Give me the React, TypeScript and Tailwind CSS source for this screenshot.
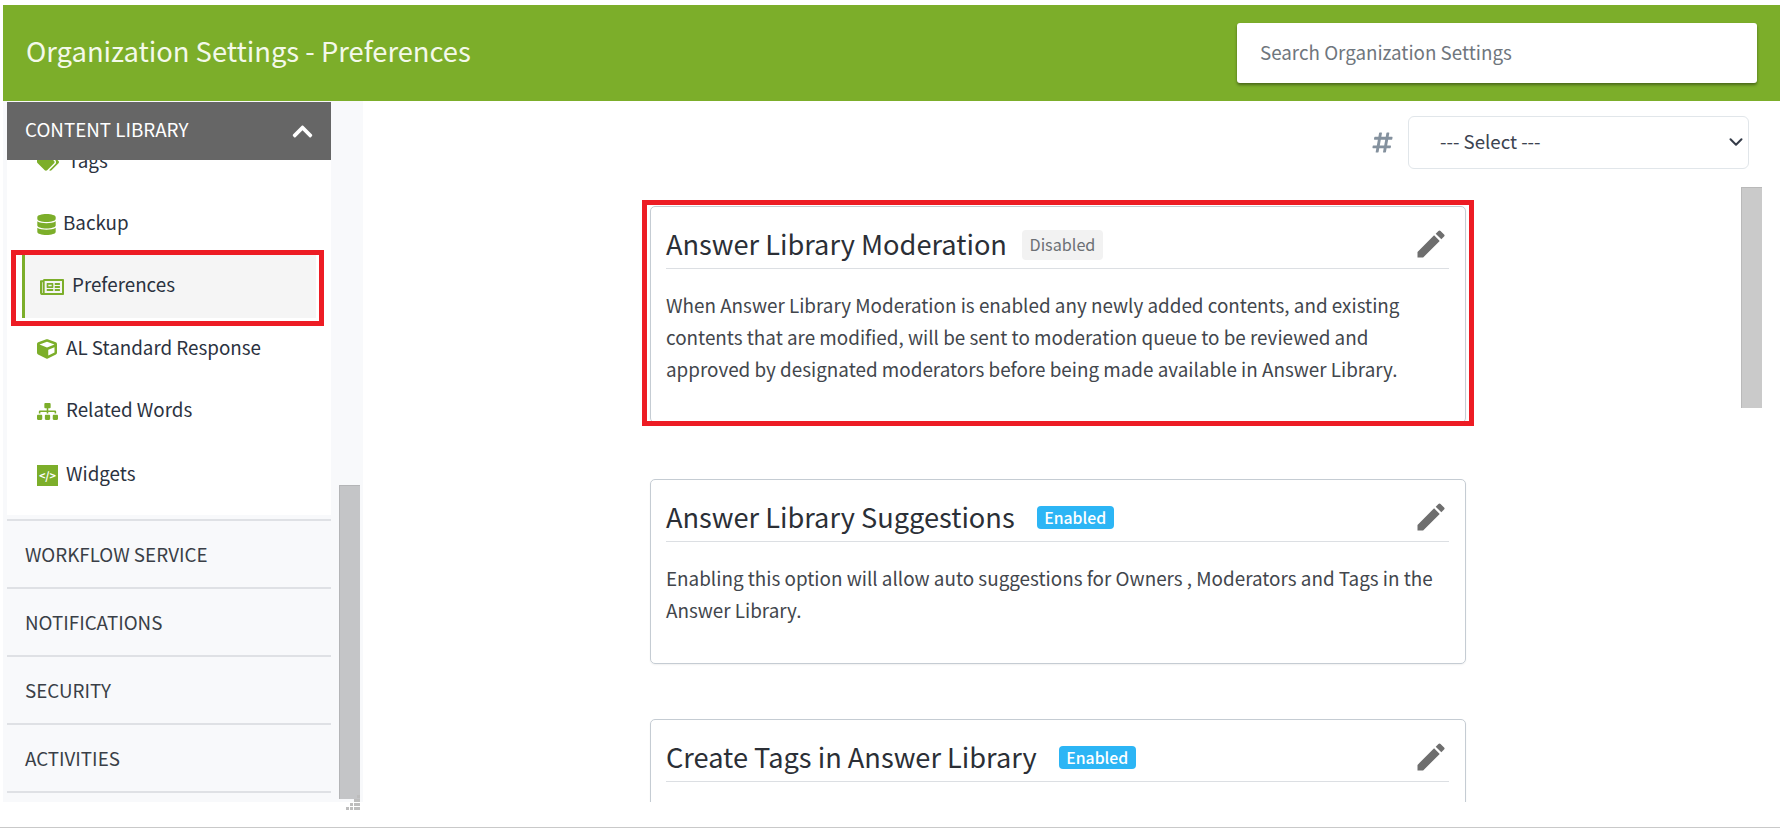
import type { ReactNode } from "react";
import { FaChevronUp, FaCube, FaDatabase, FaHashtag, FaRegNewspaper, FaSitemap, FaTags } from "react-icons/fa";
import { MdEdit } from "react-icons/md";
import { ChevronDown } from "lucide-react";

const font = { sans: "font-['Noto_Sans_CJK_JP','Source_Sans_Pro',sans-serif]" };

const navItems: { label: string; icon: ReactNode; className: string }[] = [
  { label: "Tags", icon: <FaTags size={22} />, className: "h-[62px] pl-[30px] gap-[9px]" },
  { label: "Backup", icon: <FaDatabase size={21} />, className: "h-[62px] pl-[29px] gap-[6px]" },
  { label: "AL Standard Response", icon: <FaCube size={20} />, className: "h-[62px] pl-[30px] gap-[9px]" },
  { label: "Related Words", icon: <FaSitemap size={21} />, className: "h-[62px] pl-[30px] gap-[8px]" },
];

const sections = ["WORKFLOW SERVICE", "NOTIFICATIONS", "SECURITY", "ACTIVITIES"];

const cards = [
  {
    title: "Answer Library Moderation",
    enabled: false,
    body: "When Answer Library Moderation is enabled any newly added contents, and existing contents that are modified, will be sent to moderation queue to be reviewed and approved by designated moderators before being made available in Answer Library.",
    boxed: true,
  },
  {
    title: "Answer Library Suggestions",
    enabled: true,
    body: "Enabling this option will allow auto suggestions for Owners , Moderators and Tags in the Answer Library.",
    boxed: false,
  },
  {
    title: "Create Tags in Answer Library",
    enabled: true,
    body: "",
    boxed: false,
  },
];

function SettingCard({ title, enabled, body, boxed }: (typeof cards)[number]) {
  return (
    <div className={`relative w-[816px] ${boxed ? "mb-[56px]" : "mb-[55px]"}`}>
      <article className="rounded-[5px] border border-[#c5ccd3] pr-[16px] pb-[37px] pl-[15px] shadow-[0_1px_2px_rgba(0,0,0,0.06)]">
        <header className="flex h-[62px] items-center border-b border-[#dcdfe3] pt-[12px]">
          <h2 className="text-[27.2px] leading-none font-normal whitespace-nowrap text-[#2b2f36]">{title}</h2>
          {enabled ? (
            <span className="mt-[2px] ml-[22px] flex h-[23px] w-[77px] items-center justify-center rounded-[4px] bg-[#2cb5f5] text-[15.8px] font-medium text-white">
              Enabled
            </span>
          ) : (
            <span className="mt-[2px] ml-[15px] flex h-[30px] w-[81px] items-center justify-center rounded-[4px] bg-[#f2f2f2] text-[16.2px] text-[#6c7075]">
              Disabled
            </span>
          )}
          <MdEdit size={36} className="ml-auto text-[#6e6e6e]" />
        </header>
        <p className="mt-[20px] text-[18.85px] leading-[32px] text-[#42464c]">{body}</p>
      </article>
      {boxed && (
        <div className="pointer-events-none absolute top-[-6px] right-[-8px] left-[-8px] h-[226px] border-[5px] border-[#ed1c24]" />
      )}
    </div>
  );
}

export default function App() {
  return (
    <div className={`flex h-[829px] flex-col overflow-hidden bg-white pt-[5px] ${font.sans}`}>
      <header className="ml-[3px] flex h-[96px] shrink-0 items-center justify-between bg-[#7cae2a] pr-[23px] pl-[23px]">
        <h1 className="pb-[4px] text-[27.35px] leading-none font-normal text-[#f4f9ea]">
          Organization Settings - Preferences
        </h1>
        <input
          placeholder="Search Organization Settings"
          className="h-[60px] w-[520px] rounded-[3px] bg-white px-[23px] pb-[4px] text-[18.8px] shadow-[0_2px_3px_rgba(0,0,0,0.4)] outline-none placeholder:text-[#6f767d]"
        />
      </header>

      <div className="flex h-[701px] shrink-0">
        <aside className="relative ml-[3px] flex w-[360px] shrink-0 bg-[#f8f9fb]">
          <div className="h-full w-[336px] overflow-hidden pt-px pr-[8px] pl-[4px]">
            <div className="relative z-10 flex h-[58px] items-center justify-between bg-[#666666] pr-[17px] pl-[18px]">
              <span className="pb-[4px] text-[18.8px] text-white">CONTENT LIBRARY</span>
              <FaChevronUp size={23} className="text-white" />
            </div>
            <div className="flow-root h-[355px] bg-white text-[18.8px] text-[#2b3240]">
              <div className="mt-[-29px]">
                {navItems.slice(0, 2).map((item) => (
                  <div key={item.label} className={`flex items-center ${item.className}`}>
                    <span className="text-[#7cae2a]">{item.icon}</span>
                    <span className="pb-[4px]">{item.label}</span>
                  </div>
                ))}
                <div className="relative flex h-[63px] items-center gap-[8px] pl-[19px]">
                  <div className="absolute inset-y-0 right-[15px] left-[15px] border-l-[3px] border-[#7cae2a] bg-[#f5f5f5]" />
                  <FaRegNewspaper size={24} className="relative ml-[14px] text-[#7cae2a]" />
                  <span className="relative pb-[4px]">Preferences</span>
                  <div className="pointer-events-none absolute top-[-5px] right-[7px] bottom-[-8px] left-[4px] border-[5px] border-[#ed1c24]" />
                </div>
                {navItems.slice(2).map((item) => (
                  <div key={item.label} className={`flex items-center ${item.className}`}>
                    <span className="text-[#7cae2a]">{item.icon}</span>
                    <span className="pb-[4px]">{item.label}</span>
                  </div>
                ))}
                <div className="mt-[2px] flex h-[62px] items-center gap-[8px] pl-[30px]">
                  <span className="flex h-[21px] w-[21px] items-center justify-center bg-[#7cae2a] text-[11px] leading-none font-bold text-white">
                    {"</>"}
                  </span>
                  <span className="pb-[4px]">Widgets</span>
                </div>
              </div>
            </div>
            <div className="mt-[4px] border-t-2 border-[#dfe1e5]">
              {sections.map((label) => (
                <div
                  key={label}
                  className="flex h-[68px] items-center border-b-2 border-[#dfe1e5] pl-[18px] text-[18.8px] text-[#3a3f47]"
                >
                  {label}
                </div>
              ))}
            </div>
          </div>
          <div className="flex w-[24px] flex-col justify-end pb-[3px]">
            <div className="h-[314px] w-[21px] border-t border-l border-[#b4b5b7] bg-[#c4c5c7]" />
          </div>
          <svg width="17" height="17" viewBox="0 0 17 17" className="absolute right-[3px] bottom-[-10px] text-[#bdbdbd]">
            {[
              [14, 0], [11, 4], [14, 4], [7, 8], [11, 8], [14, 8], [3, 12], [7, 12], [11, 12], [14, 12],
            ].map(([x, y]) => (
              <rect key={`${x}-${y}`} x={x} y={y} width="3" height="3" fill="currentColor" />
            ))}
          </svg>
        </aside>

        <main className="relative flex-1 overflow-hidden">
          <div className="flex items-center justify-end gap-[14px] pt-[15px] pr-[31px]">
            <FaHashtag size={23} className="text-[#84919e]" />
            <div className="relative">
              <select className="h-[53px] w-[341px] appearance-none rounded-[6px] border border-[#e1e6ea] bg-white pb-[4px] pl-[31px] text-[18.65px] text-[#3c4350] outline-none">
                <option>--- Select ---</option>
              </select>
              <ChevronDown size={22} strokeWidth={2.2} className="pointer-events-none absolute top-[15px] right-[2px] text-[#343b48]" />
            </div>
          </div>
          <div className="mt-[37px] ml-[287px]">
            {cards.map((card) => (
              <SettingCard key={card.title} {...card} />
            ))}
          </div>
          <div className="absolute top-[86px] right-[18px] h-[221px] w-[21px] border-t border-l border-[#b9b9b9] bg-[#cacaca]" />
        </main>
      </div>

      <div className="mt-[25px] border-t border-[#c9c9c9]" />
    </div>
  );
}
